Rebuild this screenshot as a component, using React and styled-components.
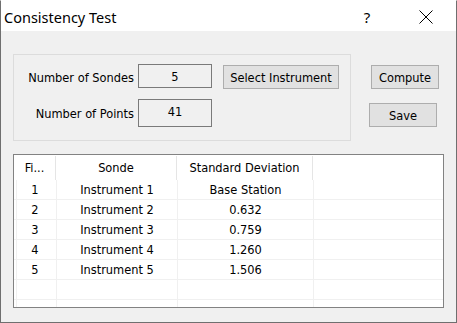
import styled, { createGlobalStyle } from 'styled-components'

const GlobalStyle = createGlobalStyle`
  html, body {
    margin: 0;
    padding: 0;
    background: #ffffff;
  }
  * { box-sizing: border-box; }
`;

const rows = [
  { id: '1', sonde: 'Instrument 1', dev: 'Base Station' },
  { id: '2', sonde: 'Instrument 2', dev: '0.632' },
  { id: '3', sonde: 'Instrument 3', dev: '0.759' },
  { id: '4', sonde: 'Instrument 4', dev: '1.260' },
  { id: '5', sonde: 'Instrument 5', dev: '1.506' },
  { id: '', sonde: '', dev: '' },
  { id: '', sonde: '', dev: '' },
];

function CloseIcon() {
  return (
    <svg width="14" height="14" viewBox="0 0 14 14">
      <path d="M0.5 0.5 L13.5 13.5 M13.5 0.5 L0.5 13.5" stroke="#000" strokeWidth="1" fill="none" />
    </svg>
  )
}

export default function App() {
  return (
    <>
      <GlobalStyle />
      <Window>
        <TitleBar>
          <Title>Consistency Test</Title>
          <Help>?</Help>
          <Close><CloseIcon /></Close>
        </TitleBar>

        <Body>
          <TopRow>
            <GroupBox>
              <FieldRow>
                <Label>Number of Sondes</Label>
                <ValueBox>5</ValueBox>
                <Button $width={116}>Select Instrument</Button>
              </FieldRow>
              <FieldRow>
                <Label>Number of Points</Label>
                <ValueBox $tall>41</ValueBox>
              </FieldRow>
            </GroupBox>

            <SideButtons>
              <Button $width={68} $shift={2}>Compute</Button>
              <Button $width={68}>Save</Button>
            </SideButtons>
          </TopRow>

          <TableBox>
            <HeaderRow>
              <HeadCell>Fi...</HeadCell>
              <HeadCell>Sonde</HeadCell>
              <HeadCell>Standard Deviation</HeadCell>
              <HeadCell $last />
            </HeaderRow>
            {rows.map((r, i) => (
              <DataRow key={i}>
                <Cell $first>{r.id}</Cell>
                <Cell>{r.sonde}</Cell>
                <Cell>{r.dev}</Cell>
                <Cell $last />
              </DataRow>
            ))}
          </TableBox>
        </Body>
      </Window>
    </>
  )
}

const Window = styled.div`
  width: 457px;
  height: 323px;
  display: flex;
  flex-direction: column;
  background: #f0f0f0;
  border: 1px solid #6f6f6f;
  border-top-color: #ffffff;
  overflow: hidden;
  font-family: "DejaVu Sans Condensed", "DejaVu Sans", sans-serif;
  font-size: 12.7px;
  color: #000;
`;

const TitleBar = styled.div`
  height: 30px;
  flex: none;
  background: #ffffff;
  display: flex;
  align-items: center;
  padding-left: 3px;
  font-family: "Noto Sans", "Open Sans", sans-serif;
`;

const Title = styled.div`
  flex: 1;
  font-size: 14.5px;
  margin-top: 2px;
`;

const Help = styled.div`
  width: 20px;
  font-size: 15px;
  margin-top: 1px;
  margin-right: 42px;
  text-align: center;
`;

const Close = styled.div`
  width: 14px;
  height: 14px;
  margin-right: 23px;
  display: flex;
  margin-top: 2px;
`;

const Body = styled.div`
  flex: 1;
  padding: 23px 0 0 12px;
  display: flex;
  flex-direction: column;
`;

const TopRow = styled.div`
  display: flex;
  align-items: flex-start;
`;

const GroupBox = styled.div`
  width: 338px;
  height: 87px;
  border: 1px solid #dcdcdc;
  padding: 9px 0 0 0;
  display: flex;
  flex-direction: column;
  gap: 10px;
`;

const FieldRow = styled.div`
  display: flex;
  align-items: flex-start;
`;

const Label = styled.div`
  width: 120px;
  text-align: right;
  align-self: center;
  padding-top: 1px;
  white-space: nowrap;
`;

const ValueBox = styled.div`
  width: 74px;
  height: ${p => (p.$tall ? '28px' : '24px')};
  margin-left: 4px;
  border: 1px solid #7a7a7a;
  display: flex;
  justify-content: center;
  align-items: ${p => (p.$tall ? 'flex-start' : 'center')};
  padding-top: ${p => (p.$tall ? '4px' : '0')};
`;

const Button = styled.div`
  width: ${p => p.$width}px;
  height: 24px;
  margin-left: ${p => (p.$shift ? p.$shift : 0)}px;
  background: #e1e1e1;
  border: 1px solid #adadad;
  display: flex;
  justify-content: center;
  align-items: center;
  white-space: nowrap;
  ${FieldRow} & {
    margin-left: 11px;
    margin-top: 1px;
  }
`;

const SideButtons = styled.div`
  display: flex;
  flex-direction: column;
  gap: 14px;
  margin-left: 18px;
  margin-top: 11px;
`;

const TableBox = styled.div`
  width: 431px;
  height: 154px;
  margin-top: 13px;
  border: 1px solid #828282;
  background: #ffffff;
  overflow: hidden;
`;

const HeaderRow = styled.div`
  display: grid;
  grid-template-columns: 42px 121px 136px 1fr;
  height: 25px;
`;

const HeadCell = styled.div`
  display: flex;
  justify-content: center;
  align-items: center;
  margin-top: 1px;
  border-right: ${p => (p.$last ? 'none' : '1px solid #e5e5e5')};
  padding-bottom: 1px;
`;

const DataRow = styled.div`
  display: grid;
  grid-template-columns: 43px 121px 136px 1fr;
  height: 20px;
  border-bottom: 1px solid #f0f0f0;
`;

const Cell = styled.div`
  display: flex;
  justify-content: center;
  align-items: center;
  border-right: ${p => (p.$last ? 'none' : '1px solid #f0f0f0')};
  box-shadow: ${p => (p.$first ? 'inset 2px 0 0 #fff, inset 3px 0 0 #f0f0f0' : 'none')};
  margin-right: ${p => (p.$last ? '2px' : '0')};
`;
